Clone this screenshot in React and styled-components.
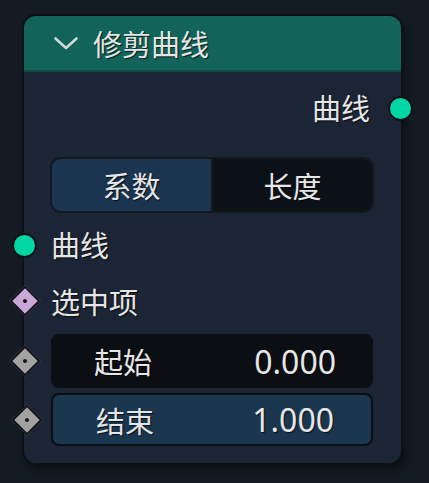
import styled, { createGlobalStyle } from 'styled-components'

const Global = createGlobalStyle`
  body {
    margin: 0;
    background: #151b22;
    font-family: "Noto Sans", "Noto Sans CJK SC", sans-serif;
  }
`

const Page = styled.div`
  padding: 16px 0 0 24px;
  height: 483px;
  box-sizing: border-box;
`

const Node = styled.div`
  position: relative;
  width: 377px;
  height: 447px;
  background: #1c2535;
  border-radius: 12px;
  box-shadow: 0 0 0 2px #0d1117, 4px 6px 10px rgba(0, 0, 0, 0.45);
  color: #e6e6e6;
  text-shadow: 1px 1px 1px rgba(0, 0, 0, 0.7);
`

const Header = styled.div`
  height: 54px;
  display: flex;
  align-items: center;
  gap: 15px;
  padding-left: 30px;
  background: #12645a;
  border-bottom: 2px solid #0f4a43;
  border-radius: 12px 12px 0 0;
  font-size: 29px;
`

const Body = styled.div`
  display: flex;
  flex-direction: column;
  padding: 0 28px 0 27px;
`

const Row = styled.div`
  position: relative;
  display: flex;
  align-items: center;
  justify-content: ${p => (p.$right ? 'flex-end' : 'flex-start')};
  height: ${p => p.$h || 56}px;
  margin-top: ${p => p.$mt || 0}px;
  margin-right: ${p => (p.$right ? 3 : 0)}px;
  font-size: 29px;
`

const Socket = styled.span`
  position: absolute;
  top: 50%;
  ${p => (p.$right ? 'right: -43px;' : 'left: -39px;')}
  width: 21px;
  height: 21px;
  margin-top: -11px;
  border-radius: 50%;
  background: #00d6a3;
  border: 2px solid #0d1117;
`

const Diamond = styled.span`
  position: absolute;
  top: 50%;
  left: -37px;
  width: 18px;
  height: 18px;
  margin-top: -11px;
  transform: rotate(45deg);
  background: ${p => p.$color};
  border: 2px solid #0d1117;
  &::after {
    content: '';
    position: absolute;
    left: 7px;
    top: 7px;
    width: 4px;
    height: 4px;
    border-radius: 50%;
    background: #1a1a1a;
  }
`

const Tabs = styled.div`
  display: flex;
  height: 52px;
  margin: 17px 1px 0 1px;
  border-radius: 9px;
  overflow: hidden;
  box-shadow: 0 0 0 2px #14171c;
`

const Tab = styled.div`
  flex: 1;
  display: flex;
  align-items: center;
  justify-content: center;
  font-size: 29px;
  background: ${p => (p.$active ? '#1b3550' : '#0c1118')};
  & + & {
    border-left: 2px solid #14171c;
  }
`

const Field = styled.div`
  position: relative;
  display: flex;
  align-items: center;
  justify-content: space-between;
  height: ${p => p.$h}px;
  margin-top: ${p => p.$mt}px;
  padding: 0 37px 0 43px;
  box-sizing: border-box;
  border-radius: 8px;
  font-size: 29px;
  background: ${p => (p.$active ? '#1b364f' : '#0b0e13')};
  border: ${p => (p.$active ? '2px solid #0b0e13' : 'none')};
`

const Value = styled.span`
  font-size: 32px;
`

function Chevron() {
  return (
    <svg width="24" height="13" viewBox="0 0 24 13" fill="none">
      <path d="M1.5 1.5 L12 11 L22.5 1.5" stroke="#cfd9d6" strokeWidth="2.6" strokeLinecap="round" strokeLinejoin="round" />
    </svg>
  )
}

export default function App() {
  return (
    <Page>
      <Global />
      <Node>
        <Header>
          <Chevron />
          <span>修剪曲线</span>
        </Header>
        <Body>
          <Row $right $h={70}>
            <span>曲线</span>
            <Socket $right />
          </Row>
          <Tabs>
            <Tab $active>系数</Tab>
            <Tab>长度</Tab>
          </Tabs>
          <Row $h={56} $mt={5}>
            <Socket />
            <span>曲线</span>
          </Row>
          <Row $h={58}>
            <Diamond $color="#cba6d9" />
            <span>选中项</span>
          </Row>
          <Field $h={54} $mt={4}>
            <Diamond $color="#a2a2a2" />
            <span>起始</span>
            <Value>0.000</Value>
          </Field>
          <Field $active $h={53} $mt={5}>
            <Diamond $color="#a2a2a2" />
            <span>结束</span>
            <Value>1.000</Value>
          </Field>
        </Body>
      </Node>
    </Page>
  )
}
